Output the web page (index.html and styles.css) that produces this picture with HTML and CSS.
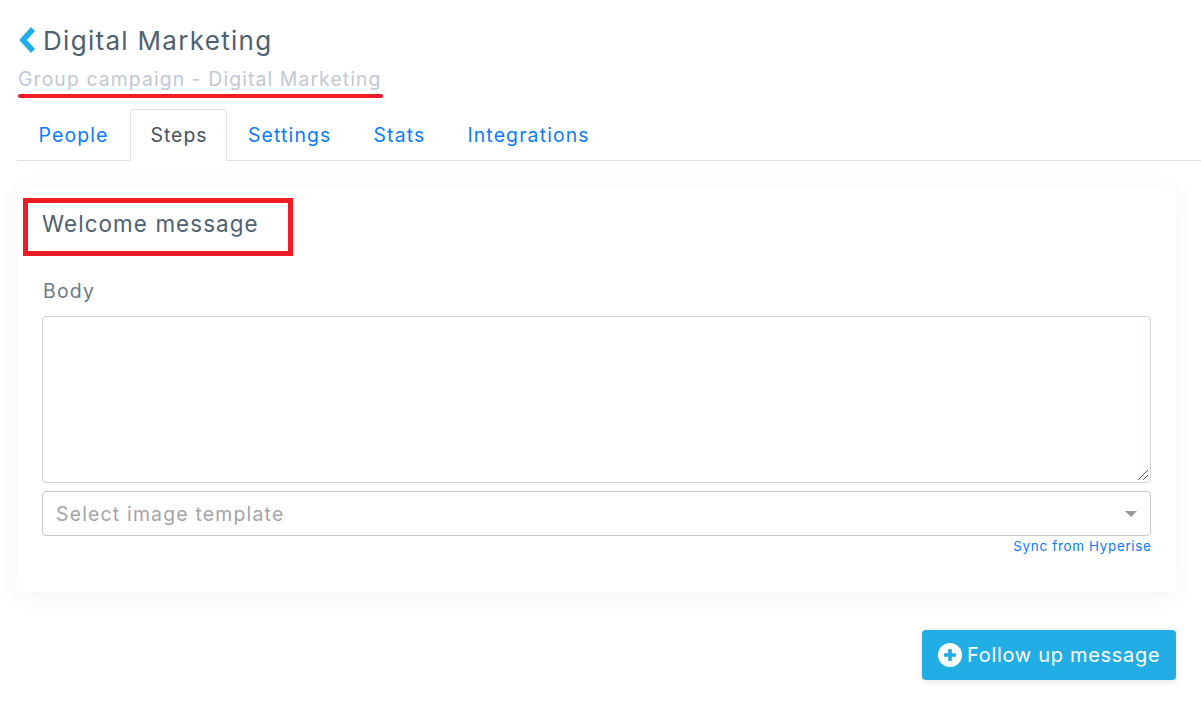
FILE: index.html
```html
<!DOCTYPE html>
<html lang="en">
<head>
<meta charset="utf-8">
<title>Digital Marketing</title>
<link rel="stylesheet" href="styles.css">
</head>
<body>
<main class="page">
  <header class="head">
    <h1 class="title">
      <svg class="back" width="18" height="26" viewBox="0 0 18 26"><path d="M14 2 L4 13 L14 24" fill="none" stroke="#22aee4" stroke-width="5.6"/></svg>
      <span>Digital Marketing</span>
    </h1>
    <p class="subtitle">Group campaign - Digital Marketing<span class="mark-line"></span></p>
  </header>
  <nav class="tabs">
    <a class="tab first">People</a>
    <a class="tab active">Steps</a>
    <a class="tab">Settings</a>
    <a class="tab">Stats</a>
    <a class="tab">Integrations</a>
  </nav>
  <section class="card">
    <h2 class="card-title">Welcome message<span class="mark-box"></span></h2>
    <label class="label">Body</label>
    <div class="textarea">
      <svg class="grip" width="12" height="12" viewBox="0 0 12 12"><path d="M1 11 L11 1 M6 11 L11 6" stroke="#555" stroke-width="1" fill="none"/></svg>
    </div>
    <div class="select">
      <span>Select image template</span>
      <i class="caret"></i>
    </div>
    <div class="sync-row"><a class="sync">Sync from Hyperise</a></div>
  </section>
  <div class="actions">
    <button class="btn">
      <svg width="24" height="24" viewBox="0 0 24 24"><circle cx="12" cy="12" r="12" fill="#fff"/><path d="M12 6v12M6 12h12" stroke="#22aee4" stroke-width="3.6"/></svg>
      <span>Follow up message</span>
    </button>
  </div>
</main>
</body>
</html>
```
FILE: styles.css
```css
* { box-sizing: border-box; }
html, body { margin: 0; background: #fff; }
body { font-family: "Inter", "Open Sans", sans-serif; color: #4d5e6c; overflow: hidden; }
.page { height: 704px; padding: 0 0 0 17px; }
.head { height: 109px; padding-top: 24px; }
.title { display: flex; align-items: center; gap: 6px; margin: 0 0 0 2px; height: 32px; font-size: 26px; letter-spacing: 1.3px; font-weight: 400; color: #4f6170; }
.subtitle { position: relative; display: inline-block; margin: 10px 0 0 1px; font-size: 19.4px; line-height: 26px; letter-spacing: 1.09px; color: #c1c8d8; }
.mark-line { position: absolute; left: 0; top: 28px; width: 365px; height: 4px; border-radius: 2px; background: #ee1c25; }
.tabs { display: flex; height: 52px; border-bottom: 1px solid #dee2e6; }
.tab { display: flex; align-items: center; justify-content: center; height: 52px; padding: 0 20px; font-size: 19.4px; letter-spacing: 1.15px; color: #0b7bfa; border: 1px solid transparent; border-radius: 4px 4px 0 0; }
.tab.first { margin-left: .5px; }
.tab.active { margin: 0 .5px 0 0; padding: 0 18px 0 20px; letter-spacing: 1px; color: #495057; background: #fff; border-color: #dee2e6 #dee2e6 #fff; }
.card { width: 1159px; height: 406px; margin-top: 25px; padding: 0 25px; background: #fff; border-radius: 4px; box-shadow: 0 4px 24px rgba(0,0,0,.05); }
.card-title { position: relative; display: block; margin: 0; padding-top: 23px; height: 92px; font-size: 22.4px; line-height: 30px; letter-spacing: 1.1px; font-weight: 400; color: #4f6170; }
.mark-box { position: absolute; left: -19px; top: 12px; width: 270px; height: 58px; border: 5px solid #ee1c25; }
.label { display: block; height: 38px; padding-left: 1px; font-size: 19.4px; line-height: 26px; letter-spacing: 1.2px; color: #6c7a86; }
.textarea { position: relative; width: 1109px; height: 167px; border: 1px solid #ced4da; border-radius: 4px; }
.grip { position: absolute; right: 1px; bottom: 1px; }
.select { display: flex; align-items: center; justify-content: space-between; width: 1109px; height: 45px; margin-top: 8px; padding: 0 13px 0 13px; border: 1px solid #c8c8c8; border-radius: 4px; font-size: 19.4px; letter-spacing: 1.2px; color: #a4a4a4; }
.caret { width: 0; height: 0; border: 6px solid transparent; border-top: 6px solid #999; border-bottom: 0; }
.sync-row { display: flex; justify-content: flex-end; width: 1109px; margin-top: 1px; }
.sync { font-size: 13.4px; line-height: 18px; letter-spacing: .7px; color: #0b7bfa; margin-right: -.6px; }
.actions { display: flex; justify-content: flex-end; width: 1159px; margin-top: 38px; }
.btn { display: flex; align-items: center; gap: 5px; width: 254px; height: 50px; padding: 0 0 0 16px; border: 0; border-radius: 4px; background: #22aee4; color: #fff; font: 400 20px "Inter", "Open Sans", sans-serif; letter-spacing: .7px; box-shadow: 0 2px 6px rgba(0,0,0,.1); }
```
